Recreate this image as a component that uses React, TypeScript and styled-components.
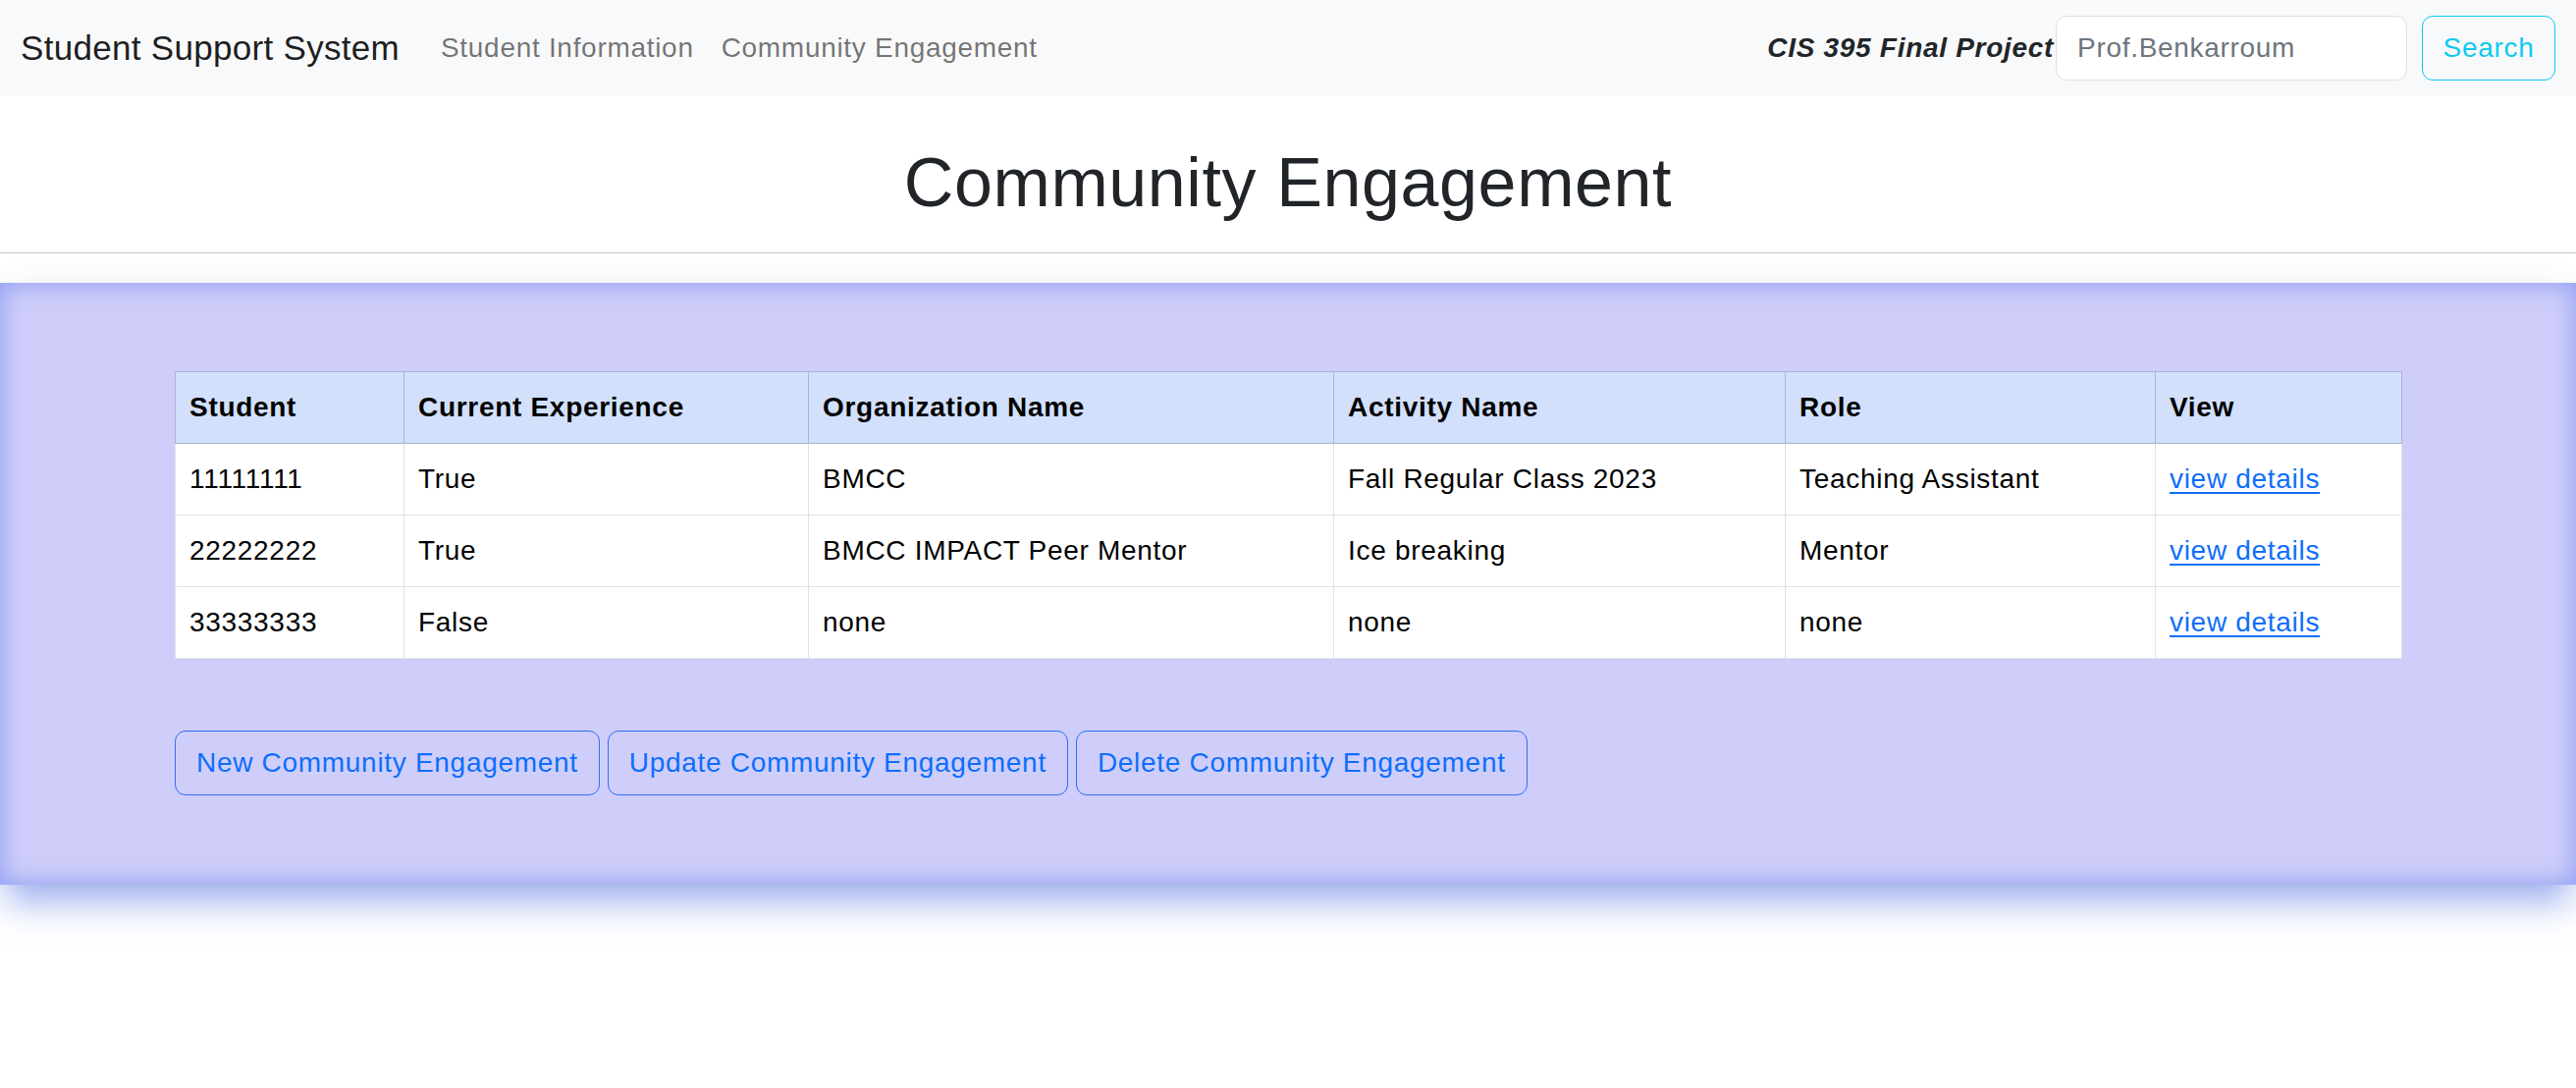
import React from "react";
import styled, { createGlobalStyle } from "styled-components";

const GlobalStyle = createGlobalStyle`
  html, body {
    margin: 0;
    padding: 0;
    background: #ffffff;
  }
  body {
    font-family: "Liberation Sans", Arial, Helvetica, sans-serif;
    font-size: 28px;
    line-height: 1.5;
    letter-spacing: 0.7px;
    color: #212529;
    min-height: 1108px;
  }
  * { box-sizing: border-box; }
`;

const Page = styled.div`
  min-height: 1108px;
  background: #ffffff;
`;

const Navbar = styled.nav`
  display: flex;
  align-items: center;
  height: 98px;
  padding: 0 21px;
  background: #f8f9fa;
`;

const Brand = styled.a`
  font-size: 35px;
  line-height: 1.5;
  letter-spacing: 0.3px;
  color: rgba(0, 0, 0, 0.9);
  text-decoration: none;
  margin-right: 28px;
`;

const NavList = styled.div`
  display: flex;
  align-items: center;
`;

const NavLink = styled.a`
  padding: 14px;
  color: rgba(0, 0, 0, 0.55);
  text-decoration: none;
  font-size: 28px;
`;

const RightGroup = styled.div`
  margin-left: auto;
  display: flex;
  align-items: center;
`;

const ProjectTag = styled.span`
  font-weight: 700;
  font-style: italic;
  color: #212529;
  font-size: 28px;
  margin-right: 2px;
`;

const SearchInput = styled.input`
  width: 358px;
  height: 66px;
  padding: 0 21px;
  font-family: inherit;
  font-size: 28px;
  letter-spacing: 0.7px;
  color: #212529;
  background: #ffffff;
  border: 1.5px solid #dee2e6;
  border-radius: 11px;
  margin-right: 15px;
  outline: none;
  &::placeholder {
    color: #6c757d;
  }
`;

const SearchButton = styled.button`
  width: 136px;
  height: 66px;
  font-family: inherit;
  font-size: 28px;
  letter-spacing: 0.7px;
  color: #0dcaf0;
  background: transparent;
  border: 1.5px solid #0dcaf0;
  border-radius: 11px;
  cursor: pointer;
`;

const PageHeader = styled.header`
  padding: 46px 0 29px;
  border-bottom: 1px solid #c8c8c8;
  text-align: center;
`;

const Title = styled.h1`
  margin: 0;
  font-size: 70px;
  font-weight: 500;
  line-height: 1.2;
  letter-spacing: 0.6px;
  color: #212529;
`;

const Panel = styled.section`
  position: relative;
  margin-top: 30px;
  padding: 90px 0 91px;
  background: rgb(207, 206, 250);
  box-shadow: inset 0 0 26px rgba(120, 140, 236, 0.8),
    0 24px 34px -6px rgba(95, 125, 225, 0.6),
    0 -6px 22px rgba(0, 0, 0, 0.03);
`;

const Container = styled.div`
  max-width: 2310px;
  margin: 0 auto;
  padding: 0 21px;
`;

const Table = styled.table`
  width: 100%;
  border-collapse: collapse;
  table-layout: fixed;
  margin-bottom: 73px;
`;

const HeadCell = styled.th`
  padding: 15px 14px;
  text-align: left;
  font-weight: 700;
  color: #000000;
  background: #d2e0fb;
  border: 1px solid #a9b6d0;
  line-height: 42px;
`;

const Cell = styled.td`
  padding: 15px 14px;
  color: #000000;
  background: #ffffff;
  border: 1px solid #dfe2e6;
  line-height: 42px;
  white-space: nowrap;
`;

const DetailLink = styled.a`
  color: #0d6efd;
  text-decoration: underline;
  text-underline-offset: 4px;
`;

const ButtonRow = styled.div`
  display: flex;
  gap: 8px;
`;

const OutlineButton = styled.button`
  height: 66px;
  padding: 0 21px;
  font-family: inherit;
  font-size: 28px;
  line-height: 42px;
  letter-spacing: 0.7px;
  color: #0d6efd;
  background: transparent;
  border: 1.5px solid #2f6ef6;
  border-radius: 11px;
  cursor: pointer;
`;

const columns = [
  { label: "Student", width: 233 },
  { label: "Current Experience", width: 412 },
  { label: "Organization Name", width: 535 },
  { label: "Activity Name", width: 460 },
  { label: "Role", width: 377 },
  { label: "View", width: 251 },
];

const rows = [
  ["11111111", "True", "BMCC", "Fall Regular Class 2023", "Teaching Assistant"],
  ["22222222", "True", "BMCC IMPACT Peer Mentor", "Ice breaking", "Mentor"],
  ["33333333", "False", "none", "none", "none"],
];

export default function App() {
  return (
    <Page>
      <GlobalStyle />
      <Navbar>
        <Brand href="#">Student Support System</Brand>
        <NavList>
          <NavLink href="#">Student Information</NavLink>
          <NavLink href="#">Community Engagement</NavLink>
        </NavList>
        <RightGroup>
          <ProjectTag>CIS 395 Final Project</ProjectTag>
          <SearchInput placeholder="Prof.Benkarroum" />
          <SearchButton>Search</SearchButton>
        </RightGroup>
      </Navbar>
      <PageHeader>
        <Title>Community Engagement</Title>
      </PageHeader>
      <Panel>
        <Container>
          <Table>
            <colgroup>
              {columns.map((c) => (
                <col key={c.label} style={{ width: c.width }} />
              ))}
            </colgroup>
            <thead>
              <tr>
                {columns.map((c) => (
                  <HeadCell key={c.label}>{c.label}</HeadCell>
                ))}
              </tr>
            </thead>
            <tbody>
              {rows.map((r) => (
                <tr key={r[0]}>
                  {r.map((v, i) => (
                    <Cell key={i}>{v}</Cell>
                  ))}
                  <Cell>
                    <DetailLink href="#">view details</DetailLink>
                  </Cell>
                </tr>
              ))}
            </tbody>
          </Table>
          <ButtonRow>
            <OutlineButton>New Community Engagement</OutlineButton>
            <OutlineButton>Update Community Engagement</OutlineButton>
            <OutlineButton>Delete Community Engagement</OutlineButton>
          </ButtonRow>
        </Container>
      </Panel>
    </Page>
  );
}
